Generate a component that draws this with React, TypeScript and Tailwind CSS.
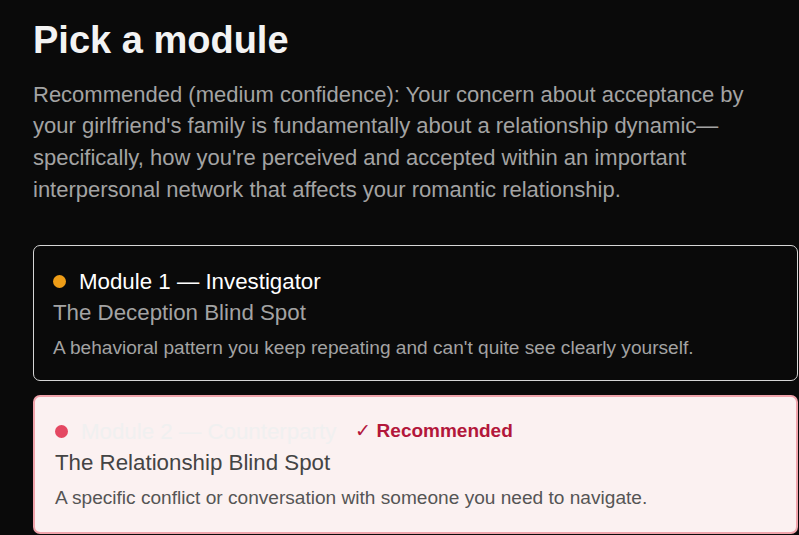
import React from "react";

export default function App() {
  return (
    <div className="min-h-screen w-full bg-[#0a0a0a] font-['Liberation_Sans',Arial,sans-serif] overflow-hidden">
      <div className="w-[765px] ml-[33px] pt-[18px]">
        <h1 className="text-[38px] leading-[1.2] font-bold text-[#f3f3f3]">Pick a module</h1>
        <p className="mt-[15px] w-[735px] text-[22px] leading-[31.7px] text-[#a3a3a3]">
          Recommended (medium confidence): Your concern about acceptance by your girlfriend's family is fundamentally about a relationship dynamic—specifically, how you're perceived and accepted within an important interpersonal network that affects your romantic relationship.
        </p>
        <div className="mt-[40px] flex flex-col gap-[14px]">
          <div className="rounded-[7px] border border-[#d6d6d6] bg-[#0a0a0a] px-[19px] pt-[21px] pb-[20px]">
            <div className="flex items-center h-[28px]">
              <span className="w-[13px] h-[13px] rounded-full bg-[#ee9d17] mr-[13px]" />
              <span className="text-[22.3px] text-white">Module 1 — Investigator</span>
            </div>
            <div className="mt-[4px] text-[22.3px] leading-[28px] text-[#a3a3a3]">The Deception Blind Spot</div>
            <div className="mt-[9px] text-[19.1px] leading-[24px] text-[#a3a3a3]">A behavioral pattern you keep repeating and can't quite see clearly yourself.</div>
          </div>
          <div className="rounded-[7px] border-2 border-[#f0a3ab] bg-[#fbf1f1] px-[20px] pt-[20px] pb-[22px]">
            <div className="flex items-center h-[28px]">
              <span className="w-[13px] h-[13px] rounded-full bg-[#e44862] mr-[13px]" />
              <span className="text-[22.3px] text-[#f0f0f0]">Module 2 — Counterparty</span>
              <span className="ml-[19px] text-[19px] font-bold text-[#b3173b]">
                <span className="font-normal">✓</span> Recommended
              </span>
            </div>
            <div className="mt-[4px] text-[22.3px] leading-[28px] text-[#444444]">The Relationship Blind Spot</div>
            <div className="mt-[9px] text-[19.1px] leading-[24px] text-[#555555]">A specific conflict or conversation with someone you need to navigate.</div>
          </div>
        </div>
      </div>
    </div>
  );
}
